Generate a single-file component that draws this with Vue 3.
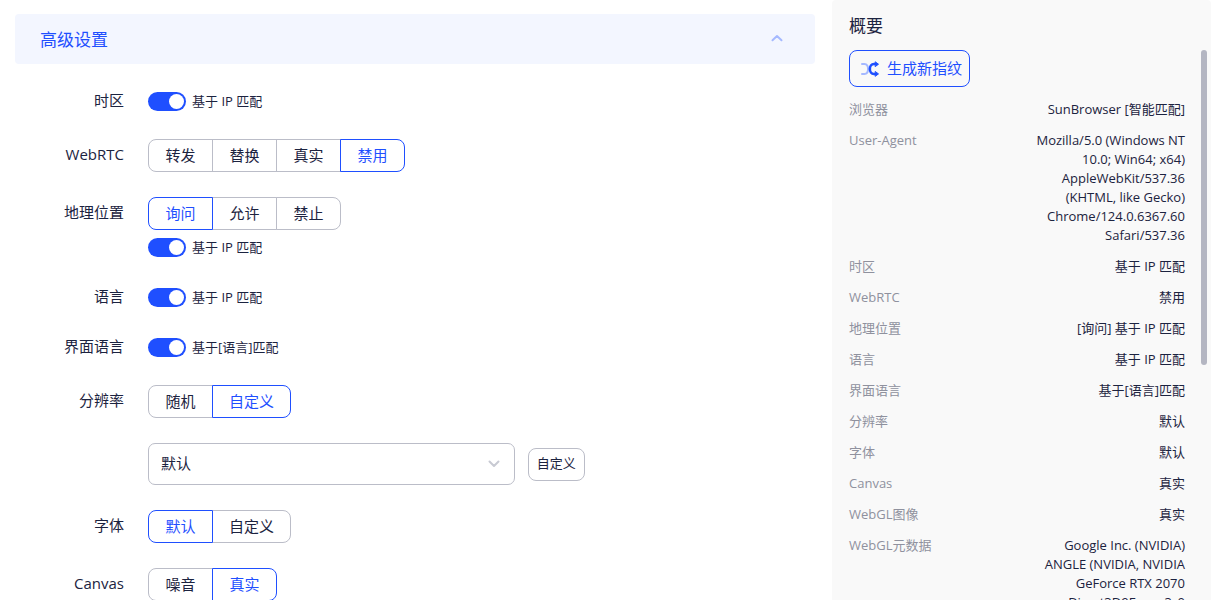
<script setup>
import { reactive, ref } from 'vue'

const rows = reactive([
  { label: '时区', toggle: '基于 IP 匹配', on: true },
  { label: 'WebRTC', options: ['转发', '替换', '真实', '禁用'], value: '禁用' },
  { label: '地理位置', options: ['询问', '允许', '禁止'], value: '询问', toggle: '基于 IP 匹配', on: true },
  { label: '语言', toggle: '基于 IP 匹配', on: true },
  { label: '界面语言', toggle: '基于[语言]匹配', on: true },
  { label: '分辨率', options: ['随机', '自定义'], value: '自定义' },
  { label: '', select: true },
  { label: '字体', options: ['默认', '自定义'], value: '默认' },
  { label: 'Canvas', options: ['噪音', '真实'], value: '真实' },
])
const resolution = ref('默认')

const summary = [
  ['浏览器', 'SunBrowser [智能匹配]'],
  ['User-Agent', 'Mozilla/5.0 (Windows NT\n10.0; Win64; x64)\nAppleWebKit/537.36\n(KHTML, like Gecko)\nChrome/124.0.6367.60\nSafari/537.36'],
  ['时区', '基于 IP 匹配'],
  ['WebRTC', '禁用'],
  ['地理位置', '[询问] 基于 IP 匹配'],
  ['语言', '基于 IP 匹配'],
  ['界面语言', '基于[语言]匹配'],
  ['分辨率', '默认'],
  ['字体', '默认'],
  ['Canvas', '真实'],
  ['WebGL图像', '真实'],
  ['WebGL元数据', 'Google Inc. (NVIDIA)\nANGLE (NVIDIA, NVIDIA\nGeForce RTX 2070\nDirect3D9Ex vs_3_0'],
]
</script>

<template>
  <div class="page">
    <main class="settings">
      <button class="section-head" type="button" aria-expanded="true">
        <span>高级设置</span>
        <svg class="chevron" width="12" height="8" viewBox="0 0 12 8" aria-hidden="true">
          <path d="M1.500 6.200 6 2l4.500 4.200" />
        </svg>
      </button>

      <form class="form" @submit.prevent>
        <div v-for="(row, i) in rows" :key="i" class="row" role="group" :aria-labelledby="'label-' + i">
          <span :id="'label-' + i" class="label">{{ row.label }}</span>
          <div class="control">
            <div v-if="row.options" class="segments">
              <button
                v-for="option in row.options"
                :key="option"
                type="button"
                class="segment"
                :class="{ active: option === row.value }"
                :aria-pressed="option === row.value"
                @click="row.value = option"
              >{{ option }}</button>
            </div>
            <label v-if="row.toggle" class="toggle">
              <input v-model="row.on" type="checkbox" role="switch" />
              <span>{{ row.toggle }}</span>
            </label>
            <div v-if="row.select" class="picker">
              <div class="select-box">
                <select v-model="resolution" aria-label="分辨率">
                  <option>默认</option>
                </select>
                <svg class="arrow" width="12" height="8" viewBox="0 0 12 8" aria-hidden="true">
                  <path d="M1.500 1.500 6 6l4.500-4.500" />
                </svg>
              </div>
              <button class="small-button" type="button">自定义</button>
            </div>
          </div>
        </div>
      </form>
    </main>

    <aside class="summary">
      <h2>概要</h2>
      <div class="summary-body">
        <button class="generate" type="button">
          <svg width="19" height="16" viewBox="0 0 19 16" aria-hidden="true">
            <path class="soft" d="M1 3h2.500C8.500 3 8 13 3.500 13H1" />
            <path class="strong" d="M14.500 3H13C7.500 3 7.500 13 13 13h1.500" />
            <path class="tip" d="M14.500 1l3 2.200-3 2.200zM14.500 10.700l3 2.200-3 2.200z" />
          </svg>
          <span>生成新指纹</span>
        </button>
        <dl>
          <div v-for="[name, value] in summary" :key="name" class="item">
            <dt>{{ name }}</dt>
            <dd>{{ value }}</dd>
          </div>
        </dl>
        <span class="scroll-thumb"></span>
      </div>
    </aside>
  </div>
</template>

<style>
body {
  margin: 0;
  overflow: hidden;
}
</style>

<style scoped>
.page {
  display: flex;
  height: 100vh;
  overflow: hidden;
  background: #fff;
  color: #1c2340;
  font-family: "Open Sans", "Noto Sans", "Noto Sans CJK SC", sans-serif;
  font-size: 15px;
}
button,
select {
  font: inherit;
  color: inherit;
  box-sizing: border-box;
  cursor: pointer;
}
.settings {
  flex: 1;
  min-width: 0;
  padding: 14px 17px 0 15px;
}
.section-head {
  display: flex;
  align-items: center;
  justify-content: space-between;
  width: 100%;
  height: 50px;
  padding: 0 32px 2px 25px;
  border: 0;
  border-radius: 4px;
  background: #f3f6ff;
  color: #1f4fff;
  font-size: 17px;
}
svg path {
  fill: none;
  stroke-linecap: round;
  stroke-linejoin: round;
}
.chevron path {
  stroke: #a5b9ff;
  stroke-width: 2;
}
.form {
  display: flex;
  flex-direction: column;
  gap: 25px;
  padding-top: 25px;
}
.row {
  display: flex;
  align-items: flex-start;
  gap: 24px;
}
.label {
  flex: none;
  width: 109px;
  line-height: 23px;
  text-align: right;
}
.row:has(.segments) .label {
  line-height: 31px;
}
.control {
  display: flex;
  flex-direction: column;
  gap: 5px;
  flex: 1;
}
.segments {
  display: flex;
}
.segment {
  min-width: 65px;
  height: 33px;
  padding: 0 16px 3px;
  border: 1px solid #bbbdc8;
  background: #fff;
}
.segment + .segment {
  margin-left: -1px;
}
.segment:first-child {
  border-radius: 8px 0 0 8px;
}
.segment:last-child {
  border-radius: 0 8px 8px 0;
}
.segment.active {
  z-index: 1;
  position: relative;
  border-color: #1f4fff;
  color: #1f4fff;
}
.toggle {
  display: flex;
  align-items: center;
  gap: 6px;
  height: 25px;
  font-size: 13px;
}
.toggle span {
  padding-bottom: 2px;
}
.toggle input {
  appearance: none;
  display: flex;
  justify-content: flex-start;
  align-items: center;
  box-sizing: border-box;
  width: 38px;
  height: 19px;
  margin: 0;
  padding: 0 2px;
  border-radius: 10px;
  background: #bbbdc8;
}
.toggle input:checked {
  justify-content: flex-end;
  background: #1f4fff;
}
.toggle input::before {
  content: "";
  width: 15px;
  height: 15px;
  border-radius: 50%;
  background: #fff;
}
.picker {
  display: flex;
  align-items: center;
  gap: 13px;
}
.select-box {
  display: grid;
  align-items: center;
  width: 55%;
}
.select-box > * {
  grid-area: 1 / 1;
}
.select-box select {
  appearance: none;
  width: 100%;
  height: 42px;
  padding: 0 12px 2px;
  border: 1px solid #bbbdc8;
  border-radius: 7px;
  background: #fff;
}
.arrow {
  justify-self: end;
  margin-right: 15px;
  pointer-events: none;
}
.arrow path {
  stroke: #c8cad3;
  stroke-width: 2;
}
.small-button {
  height: 33px;
  padding: 0 8px 3px;
  border: 1px solid #bbbdc8;
  border-radius: 8px;
  background: #fff;
  font-size: 13px;
}
.summary {
  box-sizing: border-box;
  flex: none;
  width: 379px;
  height: 100%;
  display: flex;
  flex-direction: column;
  border-radius: 4px 4px 0 0;
  background: #f9f9f9;
}
h2 {
  flex: none;
  height: 50px;
  margin: 0;
  padding-left: 17px;
  line-height: 51px;
  font-size: 17px;
  font-weight: 400;
}
.summary-body {
  position: relative;
  flex: 1;
  min-height: 0;
  overflow: hidden;
  padding: 0 26px 0 17px;
}
.generate {
  display: flex;
  align-items: center;
  gap: 7px;
  height: 37px;
  padding: 0 7px 0 11px;
  border: 1px solid #1f4fff;
  border-radius: 8px;
  background: transparent;
  color: #1f4fff;
}
.generate span {
  padding-bottom: 3px;
}
.generate .soft {
  stroke: #a5b9ff;
  stroke-width: 2;
}
.generate .strong {
  stroke: #1f4fff;
  stroke-width: 2.5;
}
.generate .tip {
  fill: #1f4fff;
  stroke: #1f4fff;
  stroke-width: 1;
}
dl {
  display: flex;
  flex-direction: column;
  gap: 12px;
  margin: 13px 0 0;
  font-size: 13px;
  line-height: 19px;
}
.item {
  display: flex;
  justify-content: space-between;
}
dt {
  color: #8f919e;
}
dd {
  margin: 0;
  text-align: right;
  white-space: pre-line;
}
.scroll-thumb {
  position: absolute;
  top: 0;
  right: 4px;
  width: 6px;
  height: 315px;
  border-radius: 3px;
  background: #b4b6c2;
}
</style>
